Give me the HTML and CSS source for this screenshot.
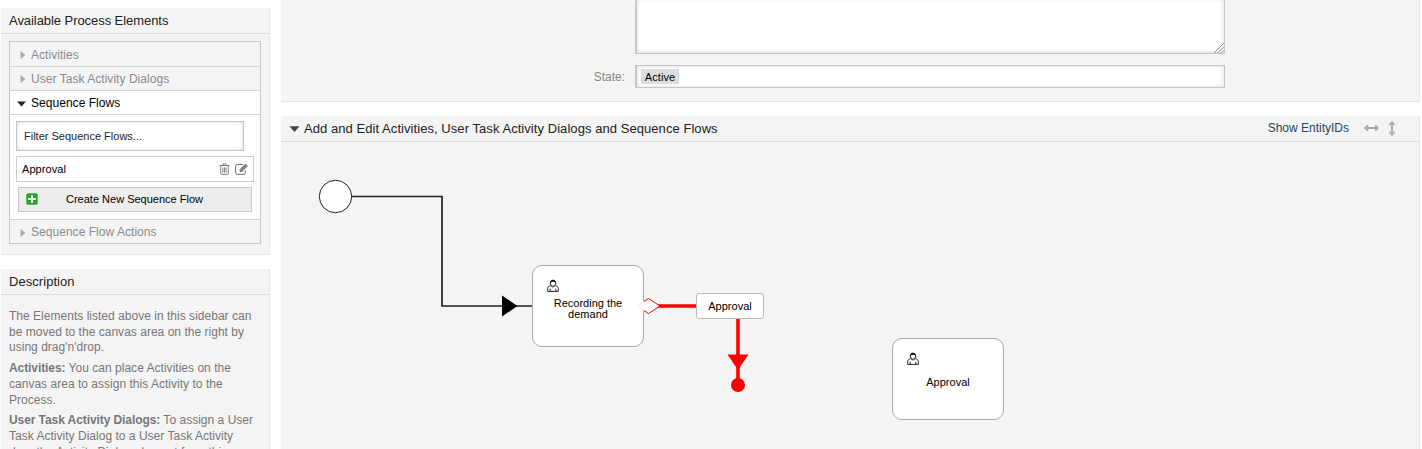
FILE: index.html
```html
<!DOCTYPE html>
<html lang="en">
<head>
<meta charset="utf-8">
<title>Process Management</title>
<link rel="stylesheet" href="styles.css">
</head>
<body>
<svg class="defs" width="0" height="0">
  <symbol id="user" viewBox="0 0 12 13">
    <path d="M3.800 6.600C1.700 7 .7 8 .7 9.800v2.600h10.600V9.800C11.300 8 10.300 7 8.200 6.600M3.200 12V9.800M8.800 12V9.800" fill="none" stroke="#222" stroke-width="1"/>
    <path d="M4 6.800c.3 1.800 3.700 1.800 4 0" fill="none" stroke="#555" stroke-width=".7"/>
    <path d="M3.300 4C3.300.400 8.700.400 8.700 4 8.700 5.500 7.700 7.300 6 7.300S3.300 5.500 3.300 4z" fill="#fff" stroke="#222"/>
    <path d="M3.200 3.600C3.300-.2 8.700-.2 8.800 3.600 7.500 2.200 5 2.600 3.200 3.600z" fill="#111"/>
  </symbol>
</svg>
<div class="page">
  <aside class="sidebar">
    <section class="widget elements">
      <h2 class="widget-title">Available Process Elements</h2>
      <ul class="accordion">
        <li class="row"><svg class="caret" viewBox="0 0 6 8"><path d="M.5 0L5.500 4 .5 8z"/></svg><span>Activities</span></li>
        <li class="row"><svg class="caret" viewBox="0 0 6 8"><path d="M.5 0L5.500 4 .5 8z"/></svg><span>User Task Activity Dialogs</span></li>
        <li class="row open"><svg class="caret-down" viewBox="0 0 9 6"><path d="M0 .5h9L4.500 5.500z"/></svg><span>Sequence Flows</span></li>
        <li class="panel">
          <div class="filter">Filter Sequence Flows...</div>
          <div class="item"><span>Approval</span>
            <svg class="trash" viewBox="0 0 11 12"><path d="M.3 2.500h10.400M3.500 2.300l.6-1.500h2.800l.6 1.500M1.700 2.700v7.500q0 1.200 1 1.200h5.600q1 0 1-1.200V2.700M3.900 4.500v5.200M5.500 4.500v5.200M7.100 4.500v5.200"/></svg>
            <svg class="edit" viewBox="0 0 13 12"><path d="M8 1.500H2.500Q.6 1.500.6 3.400v6q0 1.900 1.900 1.900h6q1.900 0 1.900-1.900V7.500"/><path class="pen" d="M5 6.500L10.400 1.100l2 2L7 8.500H5z"/></svg>
          </div>
          <div class="create"><svg class="plus" viewBox="0 0 12 12"><rect x=".3" y=".3" width="11.400" height="11.400" rx="1.800"/><path d="M6 2.200v7.600M2.200 6h7.600"/></svg><span>Create New Sequence Flow</span></div>
        </li>
        <li class="row last"><svg class="caret" viewBox="0 0 6 8"><path d="M.5 0L5.500 4 .5 8z"/></svg><span>Sequence Flow Actions</span></li>
      </ul>
    </section>
    <section class="widget description">
      <h2 class="widget-title">Description</h2>
      <div class="copy">
        <p>The Elements listed above in this sidebar can<br>be moved to the canvas area on the right by<br>using drag'n'drop.</p>
        <p><b>Activities:</b> You can place Activities on the<br>canvas area to assign this Activity to the<br>Process.</p>
        <p><b>User Task Activity Dialogs:</b> To assign a User<br>Task Activity Dialog to a User Task Activity<br>drop the Activity Dialog element from this</p>
      </div>
    </section>
  </aside>
  <main class="main">
    <section class="widget form">
      <div class="area"><svg class="grip" viewBox="0 0 11 11"><path d="M0 11L11 0M4 11l7-7M8 11l3-3"/></svg></div>
      <div class="state"><label>State:</label><div class="select"><span>Active</span></div></div>
    </section>
    <section class="widget editor">
      <header class="editor-head">
        <svg class="toggle" viewBox="0 0 10 6"><path d="M0 .3h10L5 6z"/></svg>
        <h2>Add and Edit Activities, User Task Activity Dialogs and Sequence Flows</h2>
        <a class="ids">Show EntityIDs</a>
        <svg class="wide" viewBox="0 0 15 8"><path d="M3 4h9M4 1.500L1.200 4 4 6.500M11 1.500l2.800 2.500L11 6.500"/></svg>
        <svg class="tall" viewBox="0 0 8 15"><path d="M4 3v9M1.500 4L4 1.200 6.500 4M1.500 11L4 13.800 6.500 11"/></svg>
      </header>
      <div class="canvas">
        <svg class="links" width="1138" height="307" viewBox="281 142 1138 307">
          <path d="M352 196.500H442V306H532" fill="none" stroke="#222" stroke-width="1.700"/>
          <circle cx="335.500" cy="196.500" r="16.200" fill="#fff" stroke="#222"/>
          <path d="M502 295.500l15.500 10.500L502 316.500z"/>
          <path d="M658 306h40M738 317v66" fill="none" stroke="red" stroke-width="3.600"/>
          <path d="M727.500 354.500h21L738 370z" fill="red"/>
          <circle cx="738" cy="385" r="7" fill="red"/>
        </svg>
        <div class="node recording"><svg class="user"><use href="#user"/></svg><span>Recording the<br>demand</span></div>
        <div class="node approval"><svg class="user"><use href="#user"/></svg><span>Approval</span></div>
        <svg class="diamond" viewBox="0 0 26 18"><path d="M1 9l11.500-7.500L24 9l-11.500 7.500z" fill="#fff"/><path d="M8 4.500L1 9l7 4.500" fill="none" stroke="#fdd" stroke-width=".8"/><path d="M8 4.500l4.500-3L24 9l-11.500 7.500-4.500-3" fill="none" stroke="red"/></svg>
        <div class="flow-label">Approval</div>
      </div>
    </section>
  </main>
</div>
</body>
</html>
```

FILE: styles.css
```css
* { box-sizing: border-box; }
body { margin: 0; background: #fff; font: 13px/16px "Liberation Sans", Arial, sans-serif; color: #222; overflow: hidden; }
h2, p, ul { margin: 0; padding: 0; font-weight: normal; }
h2 { font-size: 13px; }
svg { display: block; flex: none; }
.defs { position: absolute; }
.page { display: flex; gap: 11px; height: 449px; padding-left: 1px; overflow: hidden; }
.sidebar { width: 269px; padding-top: 8px; flex: none; }
.widget { background: #f4f4f4; border-right: 1px solid #e6e6e6; border-bottom: 1px solid #e6e6e6; }
.widget-title { height: 26px; padding-left: 8px; line-height: 25px; border-bottom: 1px solid #ddd; white-space: nowrap; letter-spacing: -.06px; }
.description .widget-title { letter-spacing: .05px; }
.elements { height: 247px; margin-bottom: 14px; }
.accordion { list-style: none; width: 252px; height: 203px; margin: 7px 0 0 8px; border: 1px solid #c8c8c8; }
.row { display: flex; align-items: center; height: 24px; padding-left: 10px; color: #8b8b8b; border-bottom: 1px solid #d4d4d4; white-space: nowrap; }
.row:first-child { height: 25px; padding-top: 1px; }
.row span { margin-left: 5px; padding-top: 1px; font-size: 12px; letter-spacing: .04px; }
.caret { width: 6px; height: 8px; margin-top: 1px; fill: #aaa; }
.open { background: #fff; color: #000; padding-left: 7px; }
.caret-down { width: 9px; height: 6px; fill: #222; margin-top: 3px; }
.last { border: 0; }
.last span { padding-top: 0; }
.panel { height: 105px; background: #fff; padding: 6px 6px 0; border-bottom: 1px solid #d0d0d0; font-size: 11px; color: #000; }
.filter { width: 228px; height: 30px; padding-left: 7px; line-height: 29px; color: #222; border: 1px solid #c5c5c5; box-shadow: inset 0 0 4px #ddd; }
.item { display: flex; align-items: center; height: 26px; width: 238px; margin-top: 5px; padding: 0 5px; border: 1px solid #ccc; }
.item span { flex: 1; letter-spacing: .06px; }
.trash { width: 11px; height: 12px; fill: none; stroke: #777; stroke-width: .9; }
.edit { width: 13px; height: 12px; margin-left: 5px; fill: none; stroke: #666; }
.pen { fill: #888; stroke-width: .7; }
.create { display: flex; align-items: center; width: 234px; height: 25px; margin: 5px 0 0 2px; padding-left: 7px; background: #ededed; border: 1px solid #c8c8c8; }
.plus { width: 12px; height: 12px; margin-bottom: 1px; fill: #28a228; stroke: #fff; stroke-width: 2; }
.plus rect { stroke: none; }
.create span { margin-left: 28px; padding-bottom: 1px; }
.description { height: 250px; }
.copy { padding: 14px 0 0 8px; color: #777; line-height: 15.7px; white-space: nowrap; font-size: 12px; letter-spacing: .02px; }
.copy b { letter-spacing: -.08px; }
.copy p { margin-bottom: 5px; }
.main { width: 1139px; flex: none; }
.form { height: 102px; margin-bottom: 14px; }
.area { display: flex; align-items: flex-end; justify-content: flex-end; width: 590px; height: 54px; margin-left: 354px; background: #fff; border: 1px solid #c8c8c8; border-top: 0; border-left-width: 2px; box-shadow: inset 0 -1px 4px #ddd; }
.grip { width: 10px; height: 10px; fill: none; stroke: #888; }
.state { display: flex; margin-top: 11px; }
.state label { width: 344px; text-align: right; color: #888; font-size: 12px; line-height: 25px; }
.select { width: 590px; height: 23px; margin-left: 10px; padding: 3px 4px; background: #fff; border: 1px solid #c5c5c5; border-left-width: 2px; box-shadow: inset 0 0 4px #ddd; }
.select span { display: block; width: 38px; height: 15px; line-height: 16px; background: #ddd; color: #000; text-align: center; font-size: 11px; letter-spacing: .1px; }
.editor { height: 340px; }
.editor-head { display: flex; align-items: center; height: 26px; padding-left: 8px; padding-right: 23px; border-bottom: 1px solid #ddd; white-space: nowrap; }
.editor-head h2 { margin-left: 4px; flex: 1; letter-spacing: .06px; }
.toggle { width: 11px; height: 6px; fill: #444; }
.ids { color: #1e4763; font-size: 12px; padding-bottom: 1px; }
.wide { width: 15px; height: 8px; margin: 0 0 1px 15px; fill: none; stroke: #aaa; stroke-width: 1.8; }
.tall { width: 8px; height: 15px; margin: 0 0 1px 9px; fill: none; stroke: #aaa; stroke-width: 1.8; }
.canvas { position: relative; height: 307px; overflow: hidden; }
.links { position: absolute; left: 0; top: 0; }
.node { position: absolute; width: 112px; height: 82px; display: flex; align-items: center; justify-content: center; background: #fff; border: 1px solid #aaa; border-radius: 10px; text-align: center; font-size: 11px; line-height: 11px; color: #000; padding-top: 6px; }
.recording { left: 251px; top: 123px; }
.approval { left: 611px; top: 196px; }
.user { position: absolute; left: 14px; top: 13px; width: 12px; height: 13px; }
.diamond { position: absolute; left: 355px; top: 155px; width: 26px; height: 18px; }
.flow-label { position: absolute; left: 415px; top: 151px; width: 68px; height: 26px; line-height: 25px; background: #fff; border: 1px solid #bbb; border-radius: 3px; text-align: center; font-size: 11px; color: #000; }
```
